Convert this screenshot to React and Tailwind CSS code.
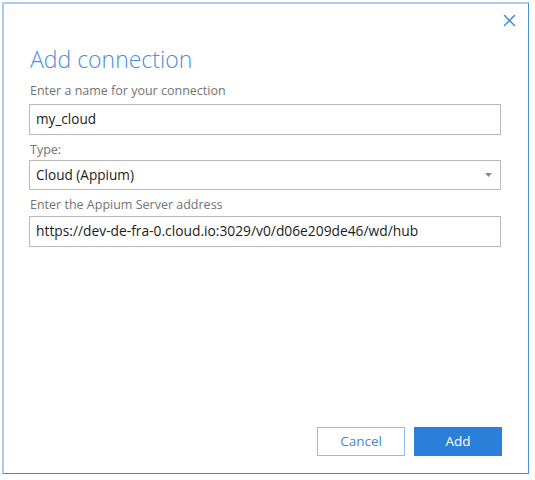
import React from "react";

export default function App() {
  const font = { fontFamily: '"Open Sans", "Noto Sans", sans-serif' };
  return (
    <div className="w-[535px] h-[480px] bg-white pt-[2px] pl-[2px]" style={font}>
      <div className="w-[527px] h-[472px] flex flex-col border-l-2 border-t-2 border-[#a9ccf2] border-r border-b border-r-[#4b91dc] border-b-[#3d86d6]">
        <div className="flex justify-end pt-[9px] pr-[12px] h-[28px]">
          <svg width="13" height="13" viewBox="0 0 13 13" className="mt-[1px]">
            <path d="M1 1 L12 12 M12 1 L1 12" stroke="#3a86d8" strokeWidth="1.4" fill="none" />
          </svg>
        </div>
        <div className="flex flex-col px-[25px]">
          <h1 className="text-[23px] font-light text-[#4a8fdf] leading-[30px] pl-[1px] mt-[12px]">Add connection</h1>
          <label className="text-[12.5px] text-[#737373] leading-[16px] pl-[1px] mt-[9px]">Enter a name for your connection</label>
          <div className="mt-[5px] h-[31px] w-[472px] border border-[#b9b9b9] flex items-center pl-[6px] text-[13.6px] text-[#1c1c1c]">my_cloud</div>
          <label className="text-[12.5px] text-[#737373] leading-[16px] pl-[1px] mt-[7px]">Type:</label>
          <div className="mt-[2px] h-[30px] w-[472px] border border-[#b9b9b9] flex items-center justify-between pl-[6px] pr-[8px] text-[13.6px] text-[#1c1c1c]">
            <span>Cloud (Appium)</span>
            <svg width="7" height="4" viewBox="0 0 7 4"><path d="M0 0 L7 0 L3.5 4 Z" fill="#8a8a8a" /></svg>
          </div>
          <label className="text-[12.5px] text-[#737373] leading-[16px] pl-[1px] mt-[7px]">Enter the Appium Server address</label>
          <div className="mt-[3px] h-[31px] w-[472px] border border-[#b9b9b9] flex items-center pl-[6px] text-[13.8px] text-[#1c1c1c]">https://dev-de-fra-0.cloud.io:3029/v0/d06e209de46/wd/hub</div>
        </div>
        <div className="flex-1" />
        <div className="flex justify-end gap-[9px] pr-[26px] pb-[17px]">
          <button className="w-[88px] h-[29px] border border-[#8fbdec] text-[#3f89d9] text-[13.5px] bg-white">Cancel</button>
          <button className="w-[88px] h-[29px] bg-[#2b7fd8] text-white text-[13.5px]">Add</button>
        </div>
      </div>
    </div>
  );
}
